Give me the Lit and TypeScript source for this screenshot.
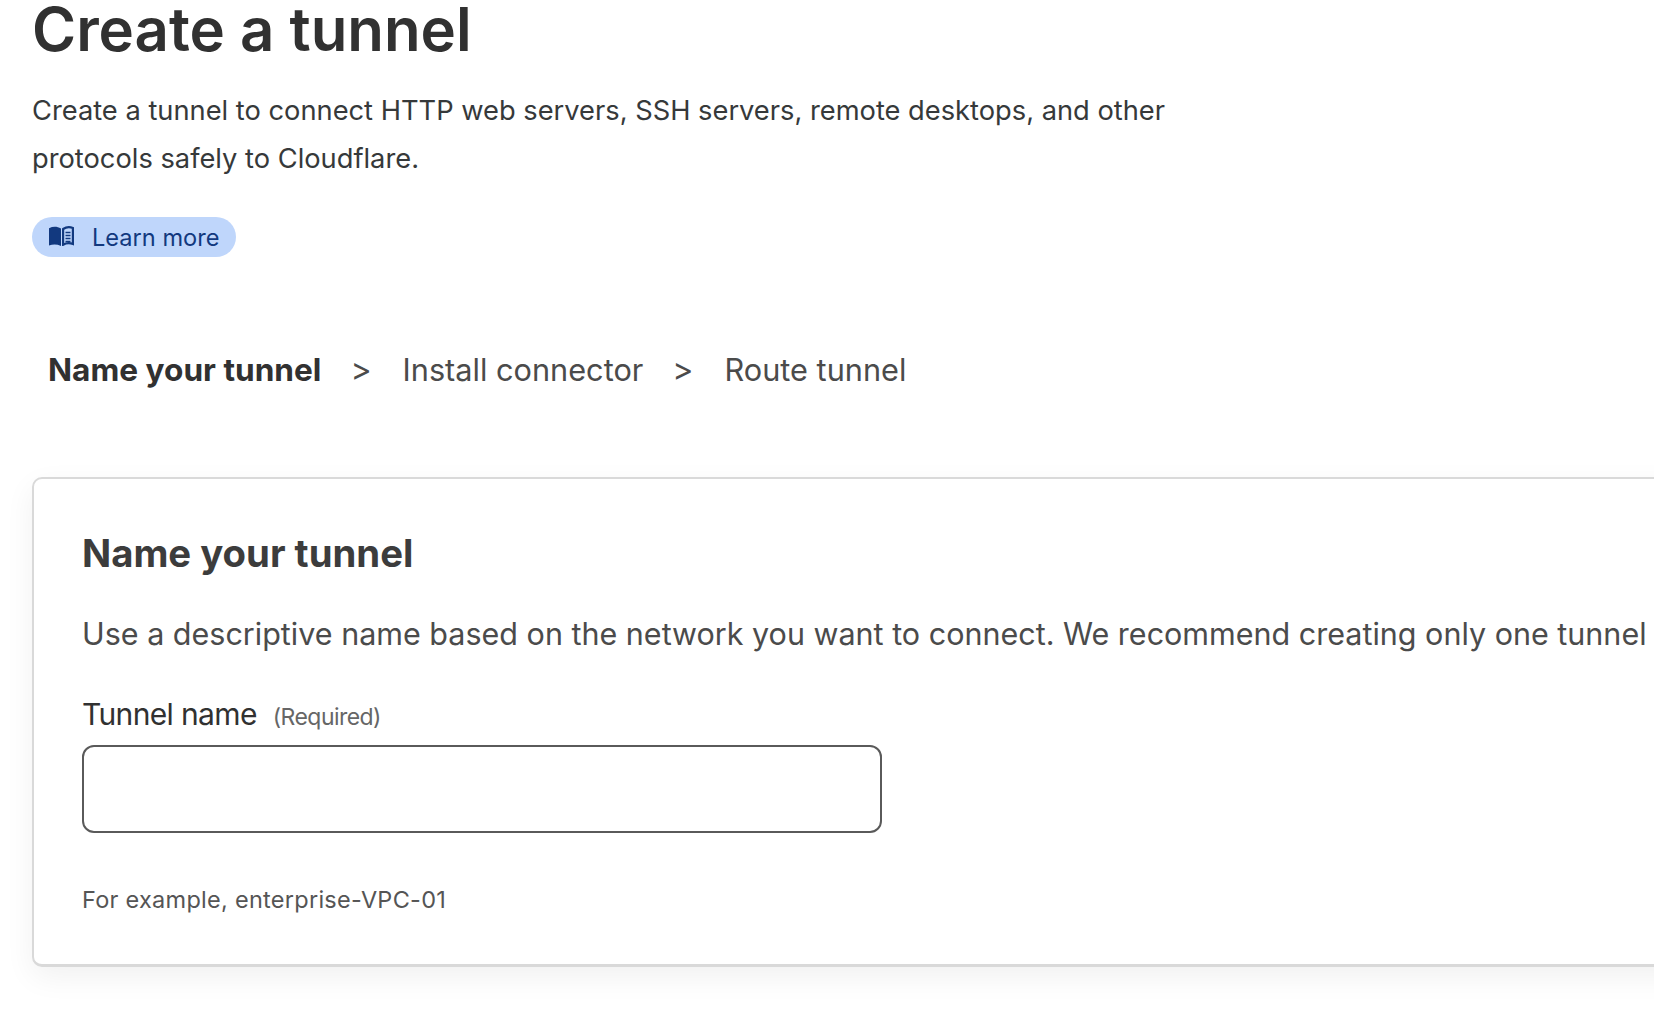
import { LitElement, html, css } from "lit";
import { customElement } from "lit/decorators.js";

@customElement("app-root")
export class AppRoot extends LitElement {
  static styles = css`
    :host {
      display: block;
      width: 1654px;
      height: 1020px;
      overflow: hidden;
      background: #fff;
      font-family: Inter, "Noto Sans", sans-serif;
      color: #313131;
      -webkit-font-smoothing: antialiased;
    }
    .page { padding: 0 0 0 32px; display: flex; flex-direction: column; align-items: flex-start; }
    h1 {
      margin: -1px 0 0;
      font-size: 59.9px;
      line-height: 60px;
      font-weight: 600;
      color: #313131;
    }
    .intro {
      margin: 28px 0 0;
      width: 1180px;
      font-size: 27.27px;
      line-height: 47.5px;
      color: #36393a;
    }
    .pill {
      margin-top: 35px;
      height: 40px;
      width: 204px;
      box-sizing: border-box;
      padding-left: 17px;
      border-radius: 20px;
      background: #bfd6fb;
      color: #12397f;
      display: flex;
      align-items: center;
      gap: 18px;
      font-size: 23.6px;
      white-space: nowrap;
    }
    .pill svg { width: 25px; height: 20px; flex: none; margin-bottom: 3px; }
    .steps {
      margin: 93px 0 0 16px;
      display: flex;
      align-items: center;
      gap: 30px;
      font-size: 30.7px;
      line-height: 40px;
      color: #4b4b4b;
      white-space: nowrap;
    }
    .steps b { font-weight: 700; font-size: 31.6px; color: #313131; }
    .steps .sep { font-size: 32px; margin: 0 1px 0 -1px; }
    .card {
      margin-top: 87px;
      width: 1740px;
      box-sizing: border-box;
      height: 490px;
      padding: 51px 48px 0;
      border: 2px solid #d9d9d9;
      border-bottom-width: 3px;
      border-radius: 10px;
      background: #fff;
      box-shadow: 0 10px 30px rgba(0, 0, 0, 0.06);
    }
    h2 {
      margin: 0;
      font-size: 38.3px;
      line-height: 46px;
      font-weight: 700;
      color: #3c3c3c;
    }
    .desc {
      margin: 38px 0 0;
      font-size: 30.5px;
      line-height: 40px;
      color: #4b4b4b;
      white-space: nowrap;
    }
    .label {
      margin-top: 41px;
      display: flex;
      align-items: baseline;
      gap: 16px;
      font-size: 30px;
      line-height: 38px;
      letter-spacing: -0.65px;
      color: #313131;
    }
    .label span { font-size: 23px; color: #666; letter-spacing: -0.55px; }
    .input {
      margin-top: 9px;
      display: block;
      width: 800px;
      height: 88px;
      box-sizing: border-box;
      border: 2px solid #5a5a5a;
      border-radius: 12px;
      background: #fff;
      padding: 0 16px;
      outline: none;
    }
    .hint {
      margin: 52px 0 0;
      font-size: 23.5px;
      line-height: 30px;
      letter-spacing: 0.27px;
      color: #555;
    }
  `;

  render() {
    return html`
      <div class="page">
        <h1>Create a tunnel</h1>
        <p class="intro">Create a tunnel to connect HTTP web servers, SSH servers, remote desktops, and other protocols safely to Cloudflare.</p>
        <div class="pill">
          <svg viewBox="0 0 25 20" aria-hidden="true">
            <path fill="#12397f" d="M0 2.200c4-1.900 8-1.900 12 .3V20c-4-1.900-8-1.900-12-.5z"/>
            <path fill="none" stroke="#12397f" stroke-width="2.200" d="M14.100 3c3.200-2 6.500-2.300 9.800-.9V18c-3.300-1.200-6.600-1.100-9.800.8z"/>
            <path fill="none" stroke="#12397f" stroke-width="1.600" d="M16.500 6.500h5M16.500 9.500h5M16.500 12.500h5M16.500 15.500h5"/>
          </svg>
          <span>Learn more</span>
        </div>
        <div class="steps">
          <b>Name your tunnel</b><span class="sep">&gt;</span><span>Install connector</span><span class="sep">&gt;</span><span>Route tunnel</span>
        </div>
        <div class="card">
          <h2>Name your tunnel</h2>
          <p class="desc">Use a descriptive name based on the network you want to connect. We recommend creating only one tunnel</p>
          <div class="label">Tunnel name <span>(Required)</span></div>
          <input class="input" type="text" />
          <p class="hint">For example, enterprise-VPC-01</p>
        </div>
      </div>
    `;
  }
}
